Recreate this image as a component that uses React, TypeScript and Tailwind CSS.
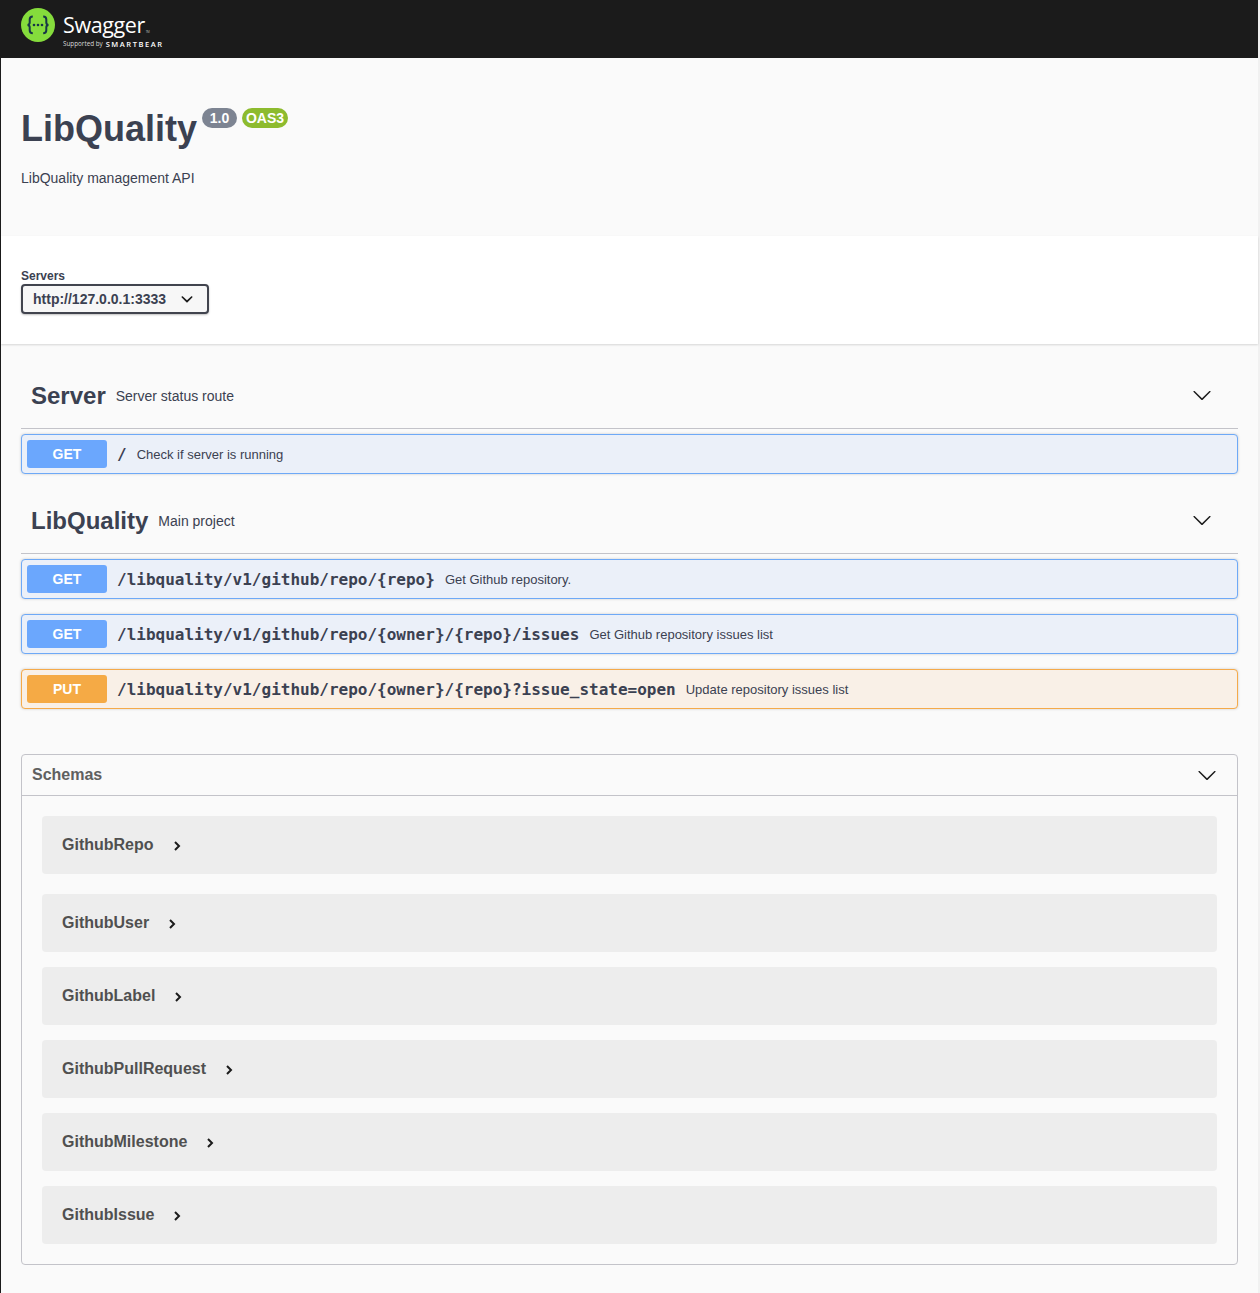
const sans = "font-['Liberation_Sans',Arial,sans-serif]"

type Op = { method: 'GET' | 'PUT'; path: string; summary: string }

const serverOps: Op[] = [{ method: 'GET', path: '/', summary: 'Check if server is running' }]

const libOps: Op[] = [
  { method: 'GET', path: '/libquality/v1/github/repo/{repo}', summary: 'Get Github repository.' },
  { method: 'GET', path: '/libquality/v1/github/repo/{owner}/{repo}/issues', summary: 'Get Github repository issues list' },
  { method: 'PUT', path: '/libquality/v1/github/repo/{owner}/{repo}?issue_state=open', summary: 'Update repository issues list' },
]

const schemas = ['GithubRepo', 'GithubUser', 'GithubLabel', 'GithubPullRequest', 'GithubMilestone', 'GithubIssue']

function ChevronDown({ className }: { className?: string }) {
  return (
    <svg viewBox="0 0 20 20" className={className} fill="currentColor">
      <path d="M17.418 6.109c.272-.268.709-.268.979 0s.271.701 0 .969l-7.908 7.83c-.27.268-.707.268-.979 0l-7.908-7.83c-.27-.268-.27-.701 0-.969.271-.268.709-.268.979 0L10 13.25l7.418-7.141z" />
    </svg>
  )
}

function OpRow({ op }: { op: Op }) {
  const isGet = op.method === 'GET'
  return (
    <div
      className={
        isGet
          ? 'h-10 flex items-center px-[5px] rounded border border-[#6ea9f7] bg-[#ebf0f9] shadow-[0_0_3px_rgba(0,0,0,0.19)]'
          : 'h-10 flex items-center px-[5px] rounded border border-[#f5aa4a] bg-[#f9f0e7] shadow-[0_0_3px_rgba(0,0,0,0.19)]'
      }
    >
      <span
        className={
          isGet
            ? 'w-20 h-7 flex items-center justify-center rounded-[3px] bg-[#6ba7fd] text-white text-sm font-bold'
            : 'w-20 h-7 flex items-center justify-center rounded-[3px] bg-[#f5aa45] text-white text-sm font-bold'
        }
      >
        {op.method}
      </span>
      <span className="ml-2.5 pt-0.5 text-[#3b4151] text-base font-bold font-['DejaVu_Sans_Mono',monospace]">{op.path}</span>
      <span className="ml-2.5 pt-0.5 text-[#3b4151] text-[13px]">{op.summary}</span>
    </div>
  )
}

function TagHeader({ name, desc }: { name: string; desc: string }) {
  return (
    <div className="h-[60px] flex items-center pl-2.5 pr-[26px] pb-1.5 border-b border-[#c3c3c9] text-[#3b4151]">
      <span className="text-2xl font-bold">{name}</span>
      <span className="ml-2.5 text-sm">{desc}</span>
      <ChevronDown className="ml-auto -mt-0.5 w-5 h-5 text-[#1b1b1b]" />
    </div>
  )
}

export default function App() {
  return (
    <div className={`${sans} min-h-[1293px] bg-[#fafafa] border-l border-r-2 border-l-[#1b1b1b] border-r-[#f1f1f1]`}>
      {/* Top bar */}
      <div className="h-[58px] bg-[#1b1b1b] flex items-start pl-5 pt-2 -ml-px">
        <svg viewBox="0 0 34 34" className="w-[34px] h-[34px] ml-px shrink-0">
          <circle cx="17" cy="17" r="17" fill="#85dc3c" />
          <path
            d="M11.8 8.5c-2.4 0-3.1 1.1-3.1 3v3c0 1.4-.6 2.2-2.1 2.4 1.5.2 2.1 1 2.1 2.4v3c0 1.9.7 3 3.1 3M22.2 8.5c2.4 0 3.1 1.1 3.1 3v3c0 1.4.6 2.2 2.1 2.4-1.5.2-2.1 1-2.1 2.4v3c0 1.9-.7 3-3.1 3"
            fill="none"
            stroke="#173647"
            strokeWidth="2"
          />
          <circle cx="13" cy="17" r="1.3" fill="#173647" />
          <circle cx="17" cy="17" r="1.3" fill="#173647" />
          <circle cx="21" cy="17" r="1.3" fill="#173647" />
        </svg>
        <div className="ml-2 mt-1 flex flex-col text-white">
          <span className="h-[26px] text-[21.5px] leading-[26px] font-normal tracking-[-0.4px] font-['Open_Sans',sans-serif]">
            Swagger<span className="ml-px text-[3px] leading-none text-[#bbbbbb]">TM</span>
          </span>
          <span className="flex items-center leading-[8px] mt-0.5">
            <span className="text-[6.3px] text-[#d8d8d8] font-['Open_Sans',sans-serif]">Supported by</span>
            <span className="ml-[3px] text-[7.5px] font-semibold tracking-[1.55px] font-['Open_Sans',sans-serif]">SMARTBEAR</span>
          </span>
        </div>
      </div>

      {/* Info */}
      <div className="h-[178px] pl-5 pt-[46px]">
        <div className="flex items-start">
          <h1 className="text-4xl leading-[49px] font-bold text-[#3b4151]">LibQuality</h1>
          <span className="ml-[5px] mt-1 h-5 w-[35px] flex items-center justify-center rounded-full bg-[#7d8492] text-white text-sm font-bold">1.0</span>
          <span className="ml-[5px] mt-1 h-5 w-[46px] flex items-center justify-center rounded-full bg-[#8dbb2e] text-white text-sm font-bold">OAS3</span>
        </div>
        <p className="mt-[15px] text-sm leading-[20px] text-[#3b4151]">LibQuality management API</p>
      </div>

      {/* Servers */}
      <div className="h-[108px] bg-white pl-5 pt-[33px] shadow-[0_1px_2px_rgba(0,0,0,0.15)] relative">
        <div className="text-xs leading-[14px] font-bold text-[#3b4151]">Servers</div>
        <div className="mt-px w-[188px] h-[30px] flex items-center pl-2.5 pr-2 rounded border-2 border-[#41444e] bg-[#f7f7f7] shadow-[0_1px_2px_rgba(0,0,0,0.25)] text-sm font-bold text-[#3b4151]">
          <span>http://127.0.0.1:3333</span>
          <svg viewBox="0 0 20 20" className="ml-auto w-6 h-6 text-[#1b1b1b]" fill="currentColor">
            <path d="M13.418 7.859c.271-.268.709-.268.978 0 .27.268.272.701 0 .969l-3.908 3.83c-.27.268-.707.268-.979 0l-3.908-3.83c-.27-.267-.27-.701 0-.969.271-.268.709-.268.978 0L10 11l3.418-3.141z" />
          </svg>
        </div>
      </div>

      {/* Operations */}
      <div className="pl-5 pr-5 pt-[25px]">
        <TagHeader name="Server" desc="Server status route" />
        <div className="mt-[5px]">
          {serverOps.map(op => <OpRow key={op.path} op={op} />)}
        </div>

        <div className="mt-[20px]">
          <TagHeader name="LibQuality" desc="Main project" />
        </div>
        <div className="mt-[5px] flex flex-col gap-[15px]">
          {libOps.map(op => <OpRow key={op.path} op={op} />)}
        </div>

        {/* Schemas */}
        <div className="mt-[45px] h-[511px] rounded border border-[#c3c3c9]">
          <div className="h-[41px] flex items-center pl-2.5 pr-5 border-b border-[#c3c3c9]">
            <span className="text-base font-bold text-[#606060]">Schemas</span>
            <ChevronDown className="ml-auto w-5 h-5 text-[#1b1b1b]" />
          </div>
          <div className="pt-5 px-5 flex flex-col">
            {schemas.map((s, i) => (
              <div
                key={s}
                className={i === 0 ? 'h-[58px] flex items-center pl-5 rounded bg-[#ededed]' : i === 1 ? 'mt-5 h-[58px] flex items-center pl-5 rounded bg-[#ededed]' : 'mt-[15px] h-[58px] flex items-center pl-5 rounded bg-[#ededed]'}
              >
                <span className="text-base font-bold text-[#505050]">{s}</span>
                <svg viewBox="0 0 10 12" className="ml-[18px] mt-0.5 w-2.5 h-3 text-[#1b1b1b]" fill="none" stroke="currentColor" strokeWidth="2">
                  <path d="M3 2l4 4-4 4" />
                </svg>
              </div>
            ))}
          </div>
        </div>
      </div>
    </div>
  )
}
